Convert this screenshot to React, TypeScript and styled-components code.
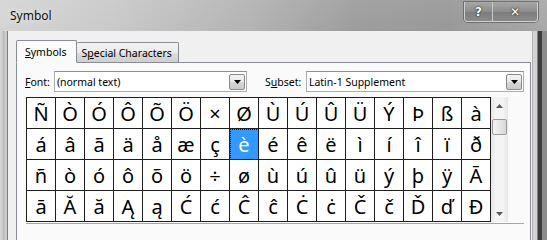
import React from 'react';
import styled, { createGlobalStyle } from 'styled-components';

const GlobalStyle = createGlobalStyle`
  html, body {
    margin: 0;
    padding: 0;
  }
  body {
    width: 547px;
    height: 240px;
    overflow: hidden;
    background: #8a8a8a;
  }
`;

const Window = styled.div`
  width: 547px;
  height: 240px;
  display: flex;
  flex-direction: column;
  overflow: hidden;
  font-family: "Noto Sans", "Open Sans", sans-serif;
  background:
    linear-gradient(to bottom, rgba(255, 255, 255, 0.18), rgba(255, 255, 255, 0) 40%),
    linear-gradient(to right, #cfcfcf 0%, #c2c2c2 20%, #a9a9a9 45%, #8f8f8f 65%, #8a8a8a 82%, #9c9c9c 100%);
`;

const TitleBar = styled.div`
  height: 31px;
  flex-shrink: 0;
  display: flex;
  justify-content: space-between;
  align-items: flex-start;
  padding: 0 9px 0 10px;
`;

const Title = styled.span`
  font-size: 12px;
  color: #111;
  margin-top: 7px;
  text-shadow: 0 0 6px rgba(255, 255, 255, 0.9);
`;

const CaptionButtons = styled.div`
  display: flex;
  margin-top: 2px;
  border: 1px solid #cfcfcf;
  border-top: none;
  border-radius: 0 0 4px 4px;
  overflow: hidden;
  box-shadow: 0 0 0 1px rgba(60, 60, 60, 0.5);
`;

const CaptionButton = styled.div<{ wide?: boolean }>`
  width: ${p => (p.wide ? '44px' : '27px')};
  height: 19px;
  display: flex;
  align-items: center;
  justify-content: center;
  color: #fff;
  font-size: 12px;
  font-weight: bold;
  font-family: "DejaVu Sans", sans-serif;
  text-shadow: 0 0 2px #222, 0 0 1px #222;
  background: linear-gradient(to bottom, #a8a8a8 0%, #8c8c8c 50%, #7c7c7c 51%, #8a8a8a 100%);
  & + & {
    border-left: 1px solid #c8c8c8;
  }
`;

const Body = styled.div`
  flex: 1;
  display: flex;
  min-height: 0;
`;

const LeftFrame = styled.div`
  width: 8px;
  background: linear-gradient(to right, #dadada 0px, #c6c6c6 3px, #b0b0b0 4px, #d0d0d0 5px, #c8c8c8 7px, #7d7d7d 7px);
`;

const RightFrame = styled.div`
  flex: 1;
  background: linear-gradient(to right, #8f8f8f 0px, #d6d6d6 1px, #cfcfcf 5px, #3c3c3c 6px, #3c3c3c 10px, #8c8c8c 10px);
`;

const Client = styled.div`
  width: 516px;
  background: #f0f0f0;
  padding: 8px 0 0 8px;
  display: flex;
  flex-direction: column;
`;

const TabStrip = styled.div`
  display: flex;
  align-items: flex-end;
  height: 23px;
  position: relative;
  z-index: 1;
`;

const Tab = styled.div<{ active?: boolean }>`
  height: ${p => (p.active ? '23px' : '20px')};
  padding: 0 ${p => (p.active ? '9px' : '6px')} 0 ${p => (p.active ? '8px' : '5px')};
  box-sizing: border-box;
  display: flex;
  align-items: center;
  font-size: 10.5px;
  color: #000;
  border: 1px solid #898c95;
  border-bottom: ${p => (p.active ? '1px solid #fafafa' : 'none')};
  border-left: ${p => (p.active ? '1px solid #898c95' : 'none')};
  border-radius: 2px 2px 0 0;
  background: ${p =>
    p.active ? '#fafafa' : 'linear-gradient(to bottom, #f3f3f3 0%, #ebebeb 50%, #dddddd 51%, #cfcfcf 100%)'};
  margin-bottom: ${p => (p.active ? '-1px' : '0')};
`;

const Key = styled.span`
  text-decoration: underline;
  text-underline-offset: 1px;
`;

const Panel = styled.div`
  flex: 1;
  width: 515px;
  box-sizing: border-box;
  border: 1px solid #898c95;
  border-bottom: none;
  background: #fafafa;
  padding: 8px 6px 0 8px;
  display: flex;
  flex-direction: column;
`;

const OptionsRow = styled.div`
  display: flex;
  align-items: center;
  height: 21px;
`;

const Label = styled.span<{ width: number }>`
  width: ${p => p.width}px;
  font-size: 10.5px;
  color: #000;
`;

const Combo = styled.div<{ width: number; gap?: number }>`
  width: ${p => p.width}px;
  height: 21px;
  box-sizing: border-box;
  margin-right: ${p => p.gap ?? 0}px;
  border: 1px solid #abadb3;
  border-top-color: #8c8f96;
  background: #fff;
  display: flex;
  align-items: center;
  justify-content: space-between;
  padding: 0 1px 0 2px;
  font-size: 10.5px;
  color: #000;
`;

const DropButton = styled.div`
  width: 16px;
  height: 16px;
  box-sizing: border-box;
  border: 1px solid #8a8a8a;
  border-radius: 2px;
  background: linear-gradient(to bottom, #f4f4f4 0%, #e8e8e8 50%, #d6d6d6 51%, #cbcbcb 100%);
  display: flex;
  align-items: center;
  justify-content: center;
`;

const CharArea = styled.div`
  display: flex;
  margin: 5px 0 0 1px;
  border-bottom: 1px solid #a6a6a6;
  padding-bottom: 1px;
  width: 498px;
`;

const CharGrid = styled.div`
  display: grid;
  grid-template-columns: repeat(16, 29px);
  grid-auto-rows: 31px;
  border-left: 1px solid #1e1e1e;
  border-top: 1px solid #1e1e1e;
`;

const Cell = styled.div<{ selected?: boolean }>`
  border-right: 1px solid #1e1e1e;
  border-bottom: 1px solid #1e1e1e;
  display: flex;
  align-items: center;
  justify-content: center;
  font-family: "Noto Sans", "Open Sans", sans-serif;
  font-size: 20px;
  line-height: 1;
  padding-top: 1px;
  box-sizing: border-box;
  color: ${p => (p.selected ? '#fff' : '#000')};
  background: ${p => (p.selected ? '#3399ff' : '#fff')};
  outline: ${p => (p.selected ? '1px dotted #1a1a1a' : 'none')};
  outline-offset: -1px;
`;

const ScrollBar = styled.div`
  width: 17px;
  display: flex;
  flex-direction: column;
  align-items: center;
  background: linear-gradient(to right, #e6e6e6 0%, #f4f4f4 30%, #f4f4f4 70%, #e6e6e6 100%);
`;

const ArrowBox = styled.div`
  height: 17px;
  width: 17px;
  display: flex;
  align-items: center;
  justify-content: center;
`;

const Thumb = styled.div`
  width: 15px;
  height: 16px;
  margin-top: 5px;
  box-sizing: border-box;
  border: 1px solid #9a9a9a;
  border-radius: 2px;
  background: linear-gradient(to right, #f2f2f2 0%, #e6e6e6 50%, #d8d8d8 100%);
`;

const Track = styled.div`
  flex: 1;
`;

const rows = [
  'ÑÒÓÔÕÖ×ØÙÚÛÜÝÞßà',
  'áâãäåæçèéêëìíîïð',
  'ñòóôõö÷øùúûüýþÿĀ',
  'āĂăĄąĆćĈĉĊċČčĎďĐ',
];

const Triangle: React.FC<{ up?: boolean; color?: string }> = ({ up, color = '#000' }) => (
  <svg width="7" height="4" viewBox="0 0 7 4">
    <path d={up ? 'M0 4 L3.5 0 L7 4 Z' : 'M0 0 L7 0 L3.5 4 Z'} fill={color} />
  </svg>
);

const App: React.FC = () => {
  return (
    <>
      <GlobalStyle />
      <Window>
        <TitleBar>
          <Title>Symbol</Title>
          <CaptionButtons>
            <CaptionButton>?</CaptionButton>
            <CaptionButton wide>✕</CaptionButton>
          </CaptionButtons>
        </TitleBar>
        <Body>
          <LeftFrame />
          <Client>
            <TabStrip>
              <Tab active>
                <Key>S</Key>ymbols
              </Tab>
              <Tab>
                S<Key>p</Key>ecial Characters
              </Tab>
            </TabStrip>
            <Panel>
              <OptionsRow>
                <Label width={29}>
                  <Key>F</Key>ont:
                </Label>
                <Combo width={194} gap={18}>
                  <span>(normal text)</span>
                  <DropButton>
                    <Triangle />
                  </DropButton>
                </Combo>
                <Label width={41}>
                  S<Key>u</Key>bset:
                </Label>
                <Combo width={219}>
                  <span>Latin-1 Supplement</span>
                  <DropButton>
                    <Triangle />
                  </DropButton>
                </Combo>
              </OptionsRow>
              <CharArea>
                <CharGrid>
                  {rows.map((row, r) =>
                    Array.from(row).map((ch, c) => (
                      <Cell key={`${r}-${c}`} selected={r === 1 && c === 7}>
                        {ch}
                      </Cell>
                    ))
                  )}
                </CharGrid>
                <ScrollBar>
                  <ArrowBox>
                    <Triangle up color="#5a5a5a" />
                  </ArrowBox>
                  <Thumb />
                  <Track />
                  <ArrowBox>
                    <Triangle color="#5a5a5a" />
                  </ArrowBox>
                </ScrollBar>
              </CharArea>
            </Panel>
          </Client>
          <RightFrame />
        </Body>
      </Window>
    </>
  );
};

export default App;
